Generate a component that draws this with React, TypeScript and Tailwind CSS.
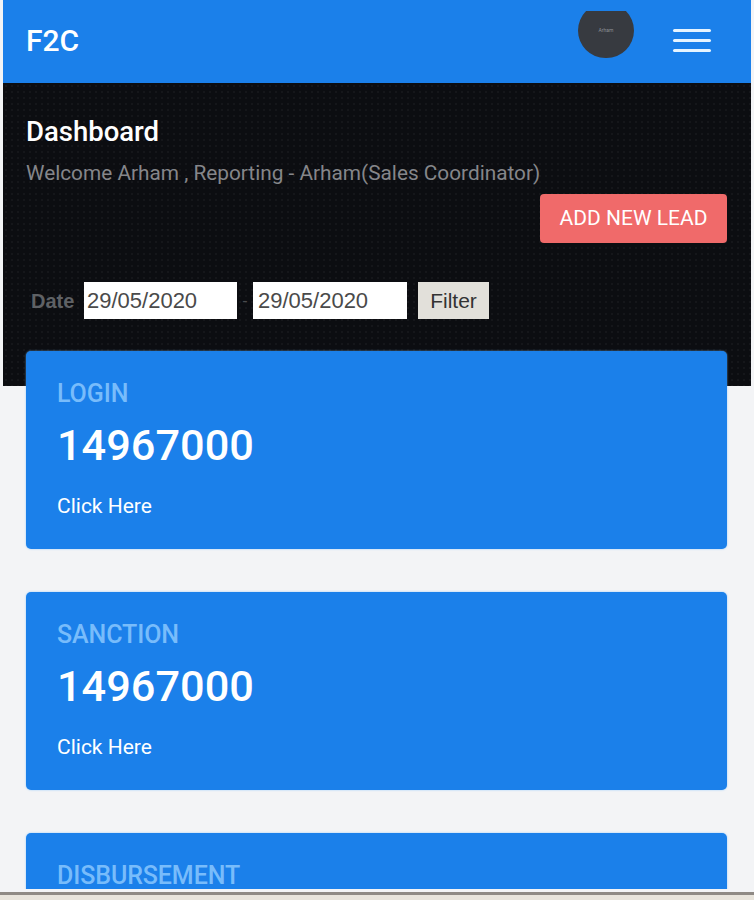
const cards = [
  { label: 'LOGIN', value: '14967000' },
  { label: 'SANCTION', value: '14967000' },
  { label: 'DISBURSEMENT' },
]

function StatCard({ label, value }: { label: string; value?: string }) {
  return (
    <div className="h-[198px] shrink-0 rounded-[5px] bg-[#1b80ea] pl-[31px] pt-[29px] shadow-[0_0_2px_rgba(120,190,255,0.8)]">
      <p className="text-[25px] leading-[28px] font-medium tracking-[-0.1px] text-[#78bcfb]">{label}</p>
      {value && (
        <>
          <p className="mt-[14px] text-[43.3px] leading-[48px] font-medium text-white">{value}</p>
          <p className="mt-[23px] text-[21px] leading-[26px] text-white">Click Here</p>
        </>
      )}
    </div>
  )
}

export default function App() {
  return (
    <div className="flex h-[900px] w-[754px] flex-col overflow-hidden bg-[#f3f4f6] font-['Roboto',sans-serif]">
      <div className="h-[889px] shrink-0 overflow-hidden px-[3px]">
        {/* Top bar */}
        <header className="flex h-[83px] items-center justify-between bg-[#1b80ea] pb-[3px] pl-[23px] pr-[40px]">
          <span className="text-[30px] font-medium text-white">F2C</span>
          <div className="flex items-center gap-[39px]">
            <div className="mb-[11px] h-[47px] w-[56px] overflow-hidden">
              <div className="-mt-[8px] flex h-[55px] w-[56px] items-center justify-center rounded-full bg-[#373a40]">
                <span className="text-[5px] leading-none text-[#8d9096]">Arham</span>
              </div>
            </div>
            <div className="flex w-[38px] flex-col gap-[7px]">
              <span className="h-[3px] rounded-full bg-[#e6f4ff]" />
              <span className="h-[3px] rounded-full bg-[#e6f4ff]" />
              <span className="h-[3px] rounded-full bg-[#e6f4ff]" />
            </div>
          </div>
        </header>

        {/* Dark banner */}
        <section className="h-[303px] bg-[#0c0d11] bg-[radial-gradient(#15161a_1px,transparent_1px)] bg-[length:6px_6px] pl-[23px] pr-[24px] pt-[32px]">
          <h1 className="text-[27.5px] leading-[34px] font-medium text-white">Dashboard</h1>
          <p className="mt-[11px] text-[20.8px] leading-[26px] text-[#85868a]">
            Welcome Arham , Reporting - Arham(Sales Coordinator)
          </p>
          <div className="mt-[8px] flex justify-end">
            <button className="flex h-[49px] w-[187px] items-center justify-center rounded-[4px] bg-[#f06a6a] text-[21px] text-white">
              ADD NEW LEAD
            </button>
          </div>
          <div className="mt-[39px] flex items-center pl-[5px] font-['Liberation_Sans',sans-serif]">
            <span className="w-[53px] text-[20px] font-bold text-[#5f6165]">Date</span>
            <input
              readOnly
              value="29/05/2020"
              className="h-[37px] w-[153px] bg-white px-[3px] text-[22px] text-[#4a4a4a] outline-none"
            />
            <span className="w-[16px] text-center text-[16px] text-[#4a4b4e]">-</span>
            <input
              readOnly
              value="29/05/2020"
              className="h-[37px] w-[154px] bg-white px-[5px] text-[22px] text-[#4a4a4a] outline-none"
            />
            <button className="ml-[11px] h-[37px] w-[71px] bg-[#e2e0da] text-[21px] text-[#333333]">Filter</button>
          </div>
        </section>

        {/* Stat cards */}
        <div className="-mt-[35px] flex flex-col gap-[43px] pl-[23px] pr-[24px]">
          {cards.map((card) => (
            <StatCard key={card.label} label={card.label} value={card.value} />
          ))}
        </div>
      </div>

      {/* Window edge */}
      <div className="h-[3px] shrink-0 bg-[#f3f4f6]" />
      <div className="h-[3px] shrink-0 bg-[#8f8a85]" />
      <div className="flex-1 bg-[#e8e4dc]" />
    </div>
  )
}
